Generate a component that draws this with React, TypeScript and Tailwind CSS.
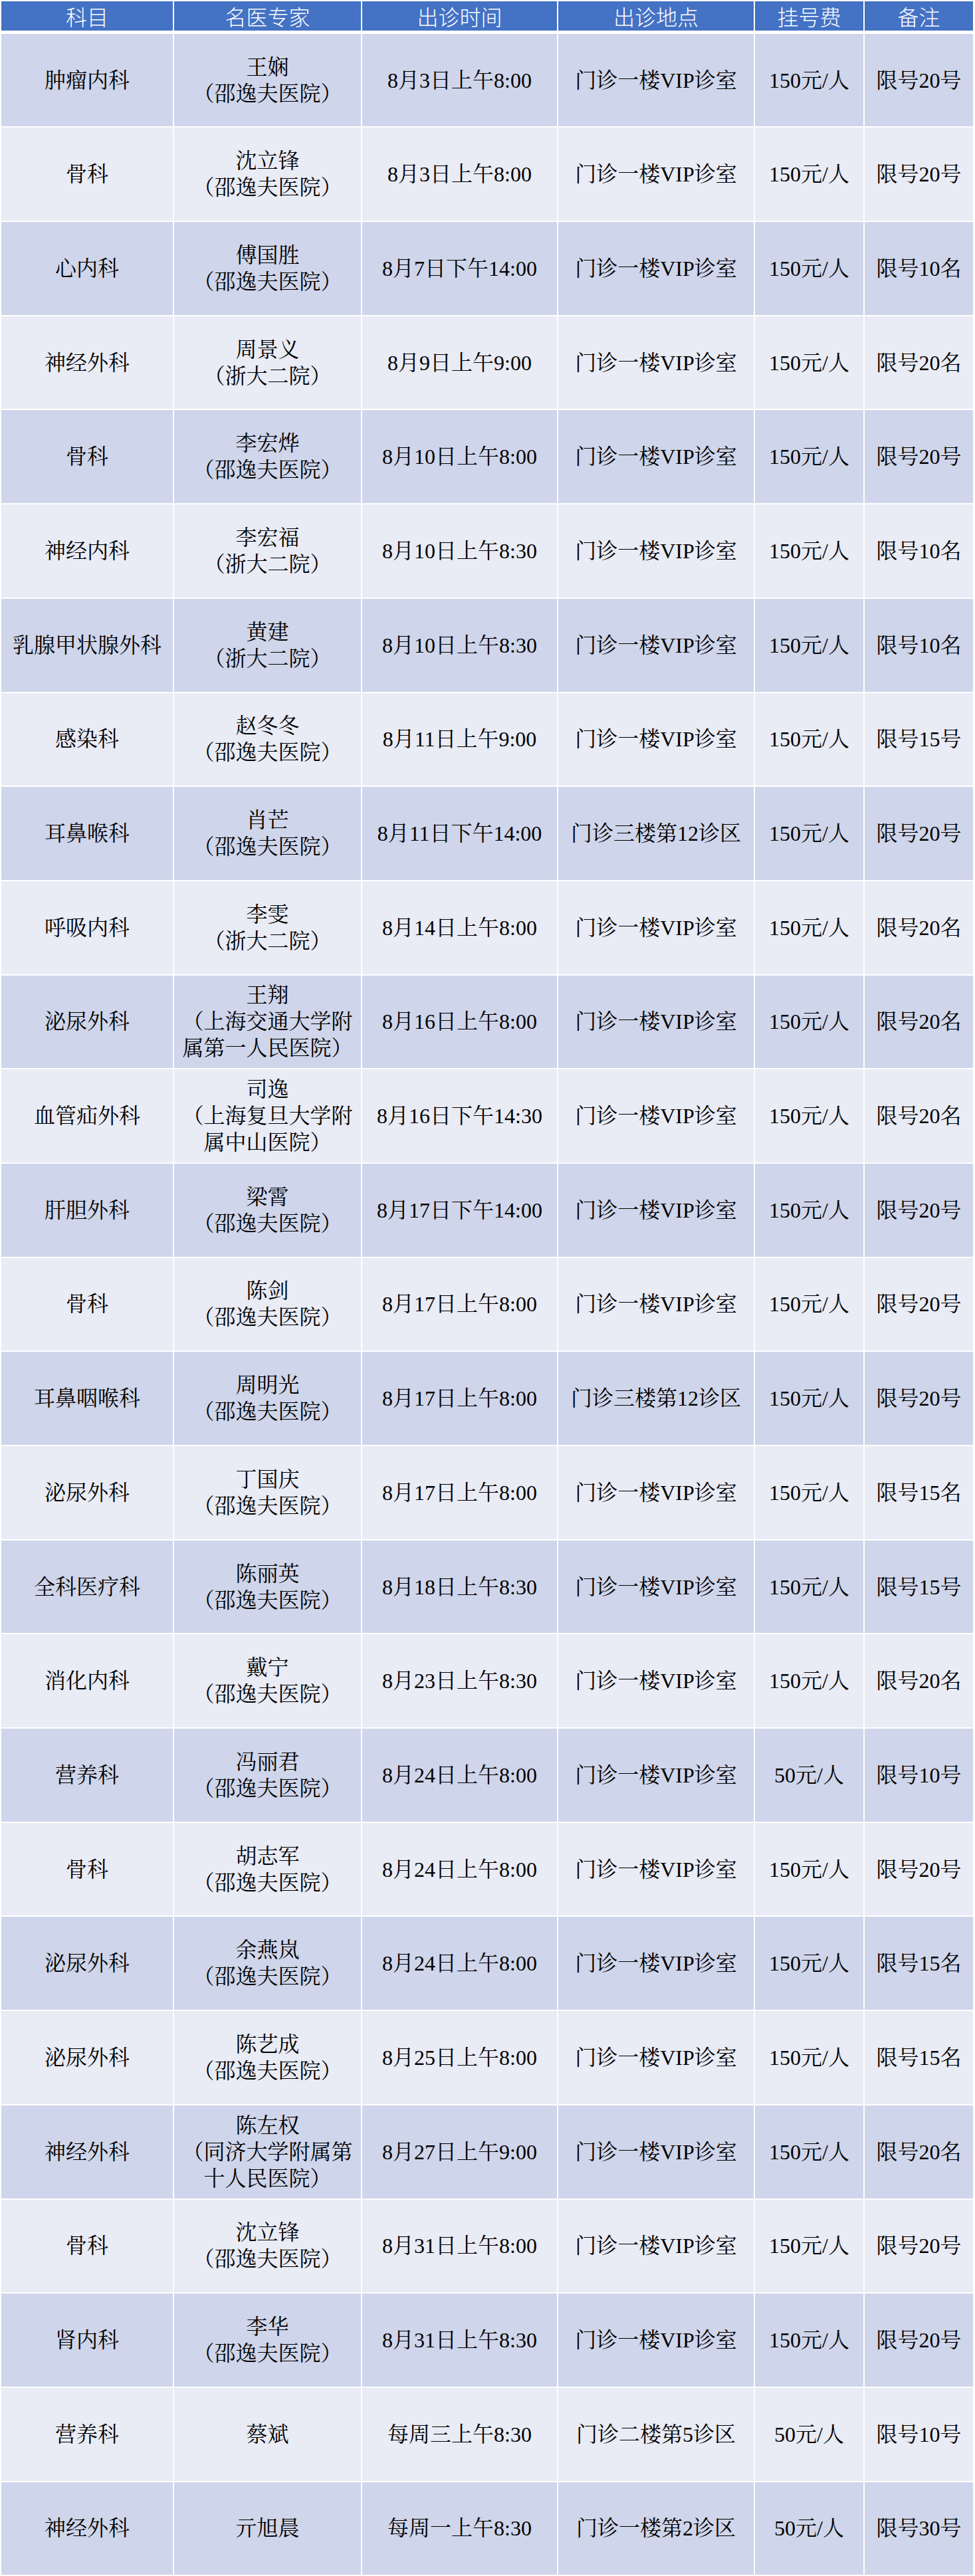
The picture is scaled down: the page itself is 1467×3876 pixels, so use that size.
import React from "react";

type Row = {
    dept: string;
    doctor: string;
    hospital?: string;
    time: string;
    place: string;
    fee: string;
    note: string;
};

const VIP = "门诊一楼VIP诊室";
const SYF = "（邵逸夫医院）";
const ZD2 = "（浙大二院）";

const rows: Row[] = [
    { dept: "肿瘤内科", doctor: "王娴", hospital: SYF, time: "8月3日上午8:00", place: VIP, fee: "150元/人", note: "限号20号" },
    { dept: "骨科", doctor: "沈立锋", hospital: SYF, time: "8月3日上午8:00", place: VIP, fee: "150元/人", note: "限号20号" },
    { dept: "心内科", doctor: "傅国胜", hospital: SYF, time: "8月7日下午14:00", place: VIP, fee: "150元/人", note: "限号10名" },
    { dept: "神经外科", doctor: "周景义", hospital: ZD2, time: "8月9日上午9:00", place: VIP, fee: "150元/人", note: "限号20名" },
    { dept: "骨科", doctor: "李宏烨", hospital: SYF, time: "8月10日上午8:00", place: VIP, fee: "150元/人", note: "限号20号" },
    { dept: "神经内科", doctor: "李宏福", hospital: ZD2, time: "8月10日上午8:30", place: VIP, fee: "150元/人", note: "限号10名" },
    { dept: "乳腺甲状腺外科", doctor: "黄建", hospital: ZD2, time: "8月10日上午8:30", place: VIP, fee: "150元/人", note: "限号10名" },
    { dept: "感染科", doctor: "赵冬冬", hospital: SYF, time: "8月11日上午9:00", place: VIP, fee: "150元/人", note: "限号15号" },
    { dept: "耳鼻喉科", doctor: "肖芒", hospital: SYF, time: "8月11日下午14:00", place: "门诊三楼第12诊区", fee: "150元/人", note: "限号20号" },
    { dept: "呼吸内科", doctor: "李雯", hospital: ZD2, time: "8月14日上午8:00", place: VIP, fee: "150元/人", note: "限号20名" },
    { dept: "泌尿外科", doctor: "王翔", hospital: "（上海交通大学附属第一人民医院）", time: "8月16日上午8:00", place: VIP, fee: "150元/人", note: "限号20名" },
    { dept: "血管疝外科", doctor: "司逸", hospital: "（上海复旦大学附属中山医院）", time: "8月16日下午14:30", place: VIP, fee: "150元/人", note: "限号20名" },
    { dept: "肝胆外科", doctor: "梁霄", hospital: SYF, time: "8月17日下午14:00", place: VIP, fee: "150元/人", note: "限号20号" },
    { dept: "骨科", doctor: "陈剑", hospital: SYF, time: "8月17日上午8:00", place: VIP, fee: "150元/人", note: "限号20号" },
    { dept: "耳鼻咽喉科", doctor: "周明光", hospital: SYF, time: "8月17日上午8:00", place: "门诊三楼第12诊区", fee: "150元/人", note: "限号20号" },
    { dept: "泌尿外科", doctor: "丁国庆", hospital: SYF, time: "8月17日上午8:00", place: VIP, fee: "150元/人", note: "限号15名" },
    { dept: "全科医疗科", doctor: "陈丽英", hospital: SYF, time: "8月18日上午8:30", place: VIP, fee: "150元/人", note: "限号15号" },
    { dept: "消化内科", doctor: "戴宁", hospital: SYF, time: "8月23日上午8:30", place: VIP, fee: "150元/人", note: "限号20名" },
    { dept: "营养科", doctor: "冯丽君", hospital: SYF, time: "8月24日上午8:00", place: VIP, fee: "50元/人", note: "限号10号" },
    { dept: "骨科", doctor: "胡志军", hospital: SYF, time: "8月24日上午8:00", place: VIP, fee: "150元/人", note: "限号20号" },
    { dept: "泌尿外科", doctor: "余燕岚", hospital: SYF, time: "8月24日上午8:00", place: VIP, fee: "150元/人", note: "限号15名" },
    { dept: "泌尿外科", doctor: "陈艺成", hospital: SYF, time: "8月25日上午8:00", place: VIP, fee: "150元/人", note: "限号15名" },
    { dept: "神经外科", doctor: "陈左权", hospital: "（同济大学附属第十人民医院）", time: "8月27日上午9:00", place: VIP, fee: "150元/人", note: "限号20名" },
    { dept: "骨科", doctor: "沈立锋", hospital: SYF, time: "8月31日上午8:00", place: VIP, fee: "150元/人", note: "限号20号" },
    { dept: "肾内科", doctor: "李华", hospital: SYF, time: "8月31日上午8:30", place: VIP, fee: "150元/人", note: "限号20号" },
    { dept: "营养科", doctor: "蔡斌", time: "每周三上午8:30", place: "门诊二楼第5诊区", fee: "50元/人", note: "限号10号" },
    { dept: "神经外科", doctor: "亓旭晨", time: "每周一上午8:30", place: "门诊一楼第2诊区", fee: "50元/人", note: "限号30号" },
];

const headers = ["科目", "名医专家", "出诊时间", "出诊地点", "挂号费", "备注"];

const cols = "grid grid-cols-[258px_281px_293px_294px_163px_163px] gap-x-[2px]";

const Cell: React.FC<{ children: React.ReactNode; bg: string }> = ({ children, bg }) => (
    <div className={`${bg} flex flex-col items-center justify-center text-center px-[10px]`}>
        {children}
    </div>
);

export default function App() {
    return (
        <div
            className="w-[1467px] bg-white pl-[2px] pt-[2px] text-black"
            style={{ fontFamily: '"Liberation Serif", "Noto Serif CJK SC", "Noto Sans CJK SC", serif' }}
        >
            {/* header */}
            <div
                className={`${cols} h-[44px] text-[32px] leading-[44px] text-white`}
                style={{ fontFamily: '"Noto Sans CJK SC", sans-serif' }}
            >
                {headers.map((h) => (
                    <div key={h} className="bg-[#4472c4] text-center font-light">
                        {h}
                    </div>
                ))}
            </div>

            <div className="mt-[4.7px] flex flex-col gap-y-[2px]">
                {rows.map((r, i) => {
                    const bg = i % 2 === 0 ? "bg-[#cfd5ea]" : "bg-[#e9ebf5]";
                    return (
                        <div key={i} className={`${cols} h-[139.7px] text-[32px] leading-[40px]`}>
                            <Cell bg={bg}>{r.dept}</Cell>
                            <Cell bg={bg}>
                                <div>{r.doctor}</div>
                                {r.hospital && <div>{r.hospital}</div>}
                            </Cell>
                            <Cell bg={bg}>{r.time}</Cell>
                            <Cell bg={bg}>{r.place}</Cell>
                            <Cell bg={bg}>{r.fee}</Cell>
                            <Cell bg={bg}>{r.note}</Cell>
                        </div>
                    );
                })}
            </div>
        </div>
    );
}
